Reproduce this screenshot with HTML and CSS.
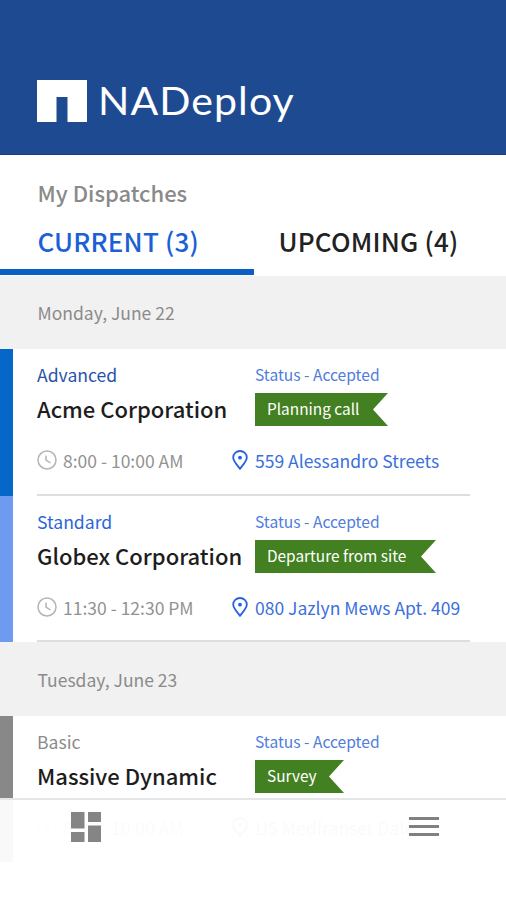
FILE: index.html
```html
<!DOCTYPE html>
<html lang="en">
<head>
<meta charset="utf-8">
<title>NADeploy</title>
<link rel="stylesheet" href="styles.css">
</head>
<body>
<svg class="defs" width="0" height="0">
  <symbol id="clock" viewBox="0 0 20 20"><circle cx="10" cy="10" r="9"/><path d="M9 5.500V10l4.500 3"/></symbol>
  <symbol id="pin" viewBox="0 0 16 20"><path d="M8 18.800C5 14.700 1.200 11.200 1.200 7.500a6.800 6.500 0 0 1 13.600 0C14.800 11.200 11 14.700 8 18.800Z"/><circle class="dot" cx="8" cy="7.700" r="1.900"/></symbol>
</svg>
<div class="app">
  <header class="header">
    <svg class="mark" viewBox="0 0 50 42"><path d="M0 0H50V42H30.500V17H19.500V42H0Z"/></svg>
    <span class="brand">NADeploy</span>
  </header>
  <section class="top">
    <h1 class="heading">My Dispatches</h1>
    <nav class="tabs">
      <a class="tab active">CURRENT (3)</a>
      <a class="tab">UPCOMING (4)</a>
    </nav>
  </section>
  <h2 class="date">Monday, June 22</h2>
  <article class="card advanced">
    <div class="body">
      <div class="info">
        <div class="left"><div class="level">Advanced</div><div class="name">Acme Corporation</div></div>
        <div class="right"><div class="status">Status - Accepted</div><div class="flag planning">Planning call</div></div>
      </div>
      <div class="meta">
        <div class="time"><svg class="clock"><use href="#clock"/></svg><span>8:00 - 10:00 AM</span></div>
        <div class="place"><svg class="pin"><use href="#pin"/></svg><span>559 Alessandro Streets</span></div>
      </div>
    </div>
  </article>
  <article class="card standard">
    <div class="body">
      <div class="info">
        <div class="left"><div class="level">Standard</div><div class="name">Globex Corporation</div></div>
        <div class="right"><div class="status">Status - Accepted</div><div class="flag departure">Departure from site</div></div>
      </div>
      <div class="meta">
        <div class="time"><svg class="clock"><use href="#clock"/></svg><span>11:30 - 12:30 PM</span></div>
        <div class="place"><svg class="pin"><use href="#pin"/></svg><span>080 Jazlyn Mews Apt. 409</span></div>
      </div>
    </div>
  </article>
  <h2 class="date">Tuesday, June 23</h2>
  <article class="card basic">
    <div class="body">
      <div class="info">
        <div class="left"><div class="level">Basic</div><div class="name">Massive Dynamic</div></div>
        <div class="right"><div class="status">Status - Accepted</div><div class="flag survey">Survey</div></div>
      </div>
      <div class="meta">
        <div class="time"><svg class="clock"><use href="#clock"/></svg><span>8:00 - 10:00 AM</span></div>
        <div class="place"><svg class="pin"><use href="#pin"/></svg><span>US Medfranset Dale.</span></div>
      </div>
    </div>
  </article>
  <nav class="bottom">
    <svg class="grid-icon" viewBox="0 0 30 30"><path d="M0 0H13.500V16.500H0ZM17 0H30V10H17ZM0 20H13.500V30H0ZM17 13.500H30V30H17Z"/></svg>
    <svg class="menu-icon" viewBox="0 0 30 20"><path d="M0 0H30V3H0ZM0 8H30V11H0ZM0 16H30V19H0Z"/></svg>
  </nav>
</div>
</body>
</html>
```
FILE: styles.css
```css
* { box-sizing: border-box; }
body { margin: 0; background: #fff; font-family: "Noto Sans CJK SC", "Noto Sans CJK JP", sans-serif; }
h1, h2 { margin: 0; font-weight: 400; }
.defs { display: block; height: 0; }
.app { position: relative; width: 506px; height: 900px; overflow: hidden; white-space: nowrap; }
.header { height: 155px; background: #1e4a91; border-bottom: 1px solid #123d8b; display: flex; align-items: flex-start; padding: 80px 0 0 37px; }
.mark { width: 50px; height: 42px; fill: #fff; }
.brand { margin: -2px 0 0 11px; font: 400 38px/44px Lato, sans-serif; color: #fff; letter-spacing: 1px; transform: scaleX(1.08); transform-origin: left; }
.top { height: 121px; padding-top: 22px; }
.heading { height: 30px; padding-left: 37.5px; font-size: 22px; line-height: 30px; font-weight: 500; color: #8a8a8a; }
.tabs { display: grid; grid-template-columns: 254px 1fr; height: 68px; }
.tab { padding: 14px 0 0 24.5px; font-size: 26px; line-height: 40px; font-weight: 500; letter-spacing: .2px; color: #222; border-bottom: 0 solid #0a5fc4; }
.tab.active { padding-left: 37.5px; color: #1b60d6; border-bottom-width: 6px; height: 68px; }
.date { height: 73px; padding-left: 37.5px; background: #f1f1f1; font-size: 17.5px; line-height: 73px; color: #8b8b8b; }
.card { height: 147px; padding-left: 24px; border-left: 13px solid #888; }
.card.standard { height: 146px; border-color: #6c9bf0; }
.card.advanced { border-color: #0667c8; }
.card.basic { height: 146px; }
.standard + .date { height: 74px; line-height: 75px; }
.body { width: 433px; height: 100%; border-bottom: 2px solid #dedede; }
.info { display: grid; grid-template-columns: 218px 1fr; height: 94px; padding-top: 12px; }
.level { margin-top: 1px; font-size: 17.6px; line-height: 26px; color: #8b8b8b; }
.advanced .level { color: #2853aa; }
.standard .level { color: #2d66d8; }
.name { font-size: 22px; line-height: 30px; margin-top: 5px; font-weight: 500; color: #1d1d1d; }
.status { margin-top: 1px; font-size: 15.6px; line-height: 24px; color: #4f7ddb; }
.flag { height: 33px; margin-top: 7px; padding-left: 12px; background: #438021; color: #fff; font-size: 15.4px; line-height: 31px; clip-path: polygon(0 0, 100% 0, calc(100% - 15px) 50%, 100% 100%, 0 100%); }
.planning { width: 133px; }
.departure { width: 181px; }
.survey { width: 89px; }
.meta { display: grid; grid-template-columns: 195px 1fr; height: 36px; }
.time, .place { display: flex; align-items: center; font-size: 17.5px; line-height: 26px; }
.time { color: #929292; }
.place { color: #3b70db; }
.clock { width: 20px; height: 20px; margin: -2px 6px 0 0; fill: none; stroke: #b4b4b4; stroke-width: 1.5; }
.pin { width: 16px; height: 20px; margin: -2px 7px 0 0; fill: none; stroke: #2462df; stroke-width: 1.8; }
.dot { fill: #2462df; stroke: none; }
.bottom { position: absolute; left: 0; right: 0; top: 798px; bottom: 0; border-top: 2px solid #e6e6e6; background: rgba(255, 255, 255, .95); display: flex; justify-content: space-between; padding: 12px 67px 0 71px; }
.basic .meta { opacity: .7; }
.grid-icon { width: 30px; height: 30px; fill: #858585; }
.menu-icon { width: 30px; height: 20px; margin-top: 5px; fill: #808080; }
```
